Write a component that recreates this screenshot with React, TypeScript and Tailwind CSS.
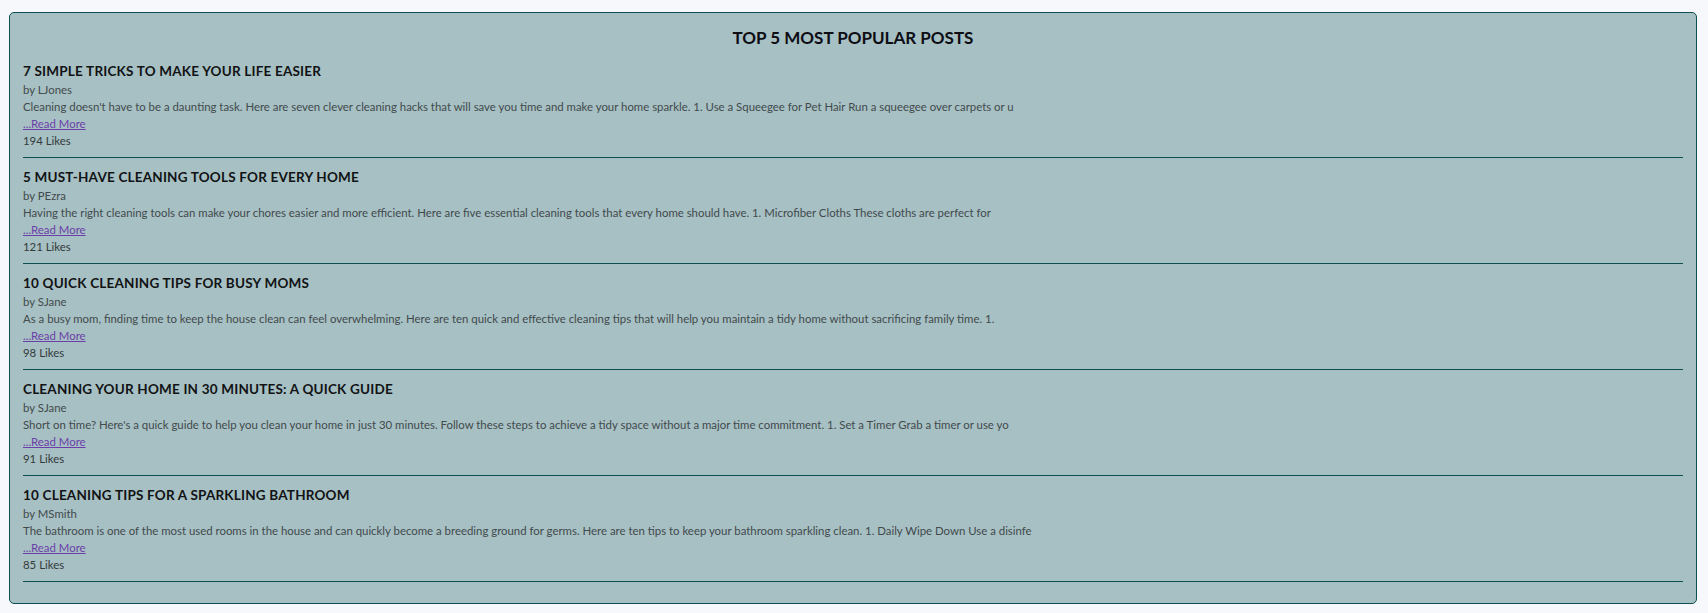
import React from "react";

const posts = [
  {
    title: "7 SIMPLE TRICKS TO MAKE YOUR LIFE EASIER",
    author: "LJones",
    body: "Cleaning doesn't have to be a daunting task. Here are seven clever cleaning hacks that will save you time and make your home sparkle. 1. Use a Squeegee for Pet Hair Run a squeegee over carpets or u",
    likes: 194,
  },
  {
    title: "5 MUST-HAVE CLEANING TOOLS FOR EVERY HOME",
    author: "PEzra",
    body: "Having the right cleaning tools can make your chores easier and more efficient. Here are five essential cleaning tools that every home should have. 1. Microfiber Cloths These cloths are perfect for",
    likes: 121,
  },
  {
    title: "10 QUICK CLEANING TIPS FOR BUSY MOMS",
    author: "SJane",
    body: "As a busy mom, finding time to keep the house clean can feel overwhelming. Here are ten quick and effective cleaning tips that will help you maintain a tidy home without sacrificing family time. 1.",
    likes: 98,
  },
  {
    title: "CLEANING YOUR HOME IN 30 MINUTES: A QUICK GUIDE",
    author: "SJane",
    body: "Short on time? Here's a quick guide to help you clean your home in just 30 minutes. Follow these steps to achieve a tidy space without a major time commitment. 1. Set a Timer Grab a timer or use yo",
    likes: 91,
  },
  {
    title: "10 CLEANING TIPS FOR A SPARKLING BATHROOM",
    author: "MSmith",
    body: "The bathroom is one of the most used rooms in the house and can quickly become a breeding ground for germs. Here are ten tips to keep your bathroom sparkling clean. 1. Daily Wipe Down Use a disinfe",
    likes: 85,
  },
];

export default function App() {
  return (
    <div className="min-h-[613px] bg-[#f6f8fc] pt-[12px] pb-[9px] pl-[9px] pr-[11px]">
      <div className="rounded-[5px] border border-[#0b4f52] bg-[#a7c0c4] pt-[13px] pb-[21px] pl-[13px] pr-[13px]">
        <h2 className="mb-[2px] text-center font-['Lato','Open_Sans',sans-serif] text-[17px] font-bold leading-[24px] text-[#0d0d14]">
          TOP 5 MOST POPULAR POSTS
        </h2>
        {posts.map((p) => (
          <div key={p.title}>
            <div className="pt-[9px] pb-[8px]">
              <h3 className="font-['Lato','Open_Sans',sans-serif] text-[13.5px] font-bold leading-[20px] tracking-[0.2px] text-[#111314]">
                {p.title}
              </h3>
              <div className="font-['Lato','Noto_Sans',sans-serif] text-[11.4px] leading-[17px] text-[#424a4c]">
                <p>by {p.author}</p>
                <p className="whitespace-nowrap">{p.body}</p>
                <p>
                  <a href="#" className="text-[#6b3fa8] underline">
                    ...Read More
                  </a>
                </p>
                <p className="text-[#333a3b]">{p.likes} Likes</p>
              </div>
            </div>
            <div className="h-px bg-[#0b4f52]" />
          </div>
        ))}
      </div>
    </div>
  );
}
